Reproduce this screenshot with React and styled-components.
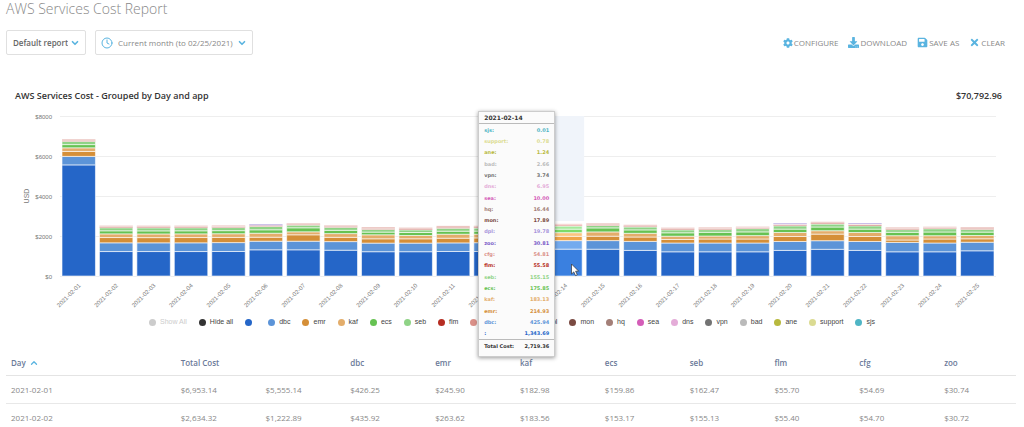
import React from 'react'
import styled, { createGlobalStyle } from 'styled-components'
import { FaCog, FaDownload, FaSave, FaTimes } from 'react-icons/fa'
import { ChevronDown, ChevronUp, Clock } from 'lucide-react'

const series = [
  { name: '', color: '#2566c8', hover: '#3a80e0' },
  { name: 'dbc', color: '#5c94d8', hover: '#74abee' },
  { name: 'emr', color: '#d58f38', hover: '#efa548' },
  { name: 'kaf', color: '#e3ad6b', hover: '#fac581' },
  { name: 'ecs', color: '#66c252', hover: '#7cdb68' },
  { name: 'seb', color: '#8fd386', hover: '#a4ea9b' },
  { name: 'flm', color: '#b62d22', hover: '#d04338' },
  { name: 'cfg', color: '#da9088', hover: '#f0a69e' },
  { name: 'zoo', color: '#7a5cc8', hover: '#9072de' },
  { name: 'dpl', color: '#a896dc', hover: '#bfacf2' },
  { name: 'mon', color: '#7a4a42' },
  { name: 'hq', color: '#a37f78' },
  { name: 'sea', color: '#d45db8' },
  { name: 'dns', color: '#e4acd8' },
  { name: 'vpn', color: '#737373' },
  { name: 'bad', color: '#bababa' },
  { name: 'ane', color: '#b8b93e' },
  { name: 'support', color: '#dbdb92' },
  { name: 'sjs', color: '#4fb5c5' },
]

// daily cost, in the order of the series above
const days = [
  [5555, 426, 246, 183, 160, 162, 56, 55],
  [1223, 436, 264, 184, 153, 155, 55, 55],
  [1223, 436, 260, 184, 153, 155, 55, 55],
  [1223, 436, 264, 184, 153, 155, 55, 55],
  [1225, 445, 260, 184, 153, 155, 55, 55],
  [1310, 430, 200, 200, 170, 165, 60, 0, 55],
  [1310, 430, 320, 150, 200, 135, 50, 50],
  [1290, 430, 215, 185, 165, 150, 55, 50],
  [1215, 430, 215, 200, 135, 135, 55, 60],
  [1215, 430, 215, 165, 150, 135, 55, 60],
  [1225, 430, 235, 200, 150, 150, 55, 60],
  [1225, 440, 240, 185, 155, 155, 55, 55],
  [1290, 430, 215, 185, 165, 150, 55, 50],
  [1343, 426, 215, 183, 176, 155, 55, 55],
  [1340, 430, 220, 215, 200, 120, 60, 55],
  [1280, 450, 220, 185, 170, 150, 50, 55],
  [1210, 440, 175, 165, 170, 150, 55, 55],
  [1210, 440, 200, 150, 185, 135, 60, 55],
  [1210, 440, 200, 170, 185, 165, 50, 50],
  [1280, 445, 250, 200, 170, 165, 55, 30, 50],
  [1335, 430, 330, 170, 185, 150, 55, 55],
  [1280, 445, 250, 200, 170, 165, 60, 30, 50],
  [1210, 470, 120, 215, 170, 135, 60, 55],
  [1210, 440, 200, 165, 185, 165, 50, 50],
  [1260, 430, 170, 165, 170, 135, 60, 55],
]

const tooltipRows = [
  ['sjs', '0.01'],
  ['support', '0.78'],
  ['ane', '1.24'],
  ['bad', '2.66'],
  ['vpn', '3.74'],
  ['dns', '6.95'],
  ['sea', '10.00'],
  ['hq', '16.44'],
  ['mon', '17.89'],
  ['dpl', '19.78'],
  ['zoo', '30.81'],
  ['cfg', '54.81'],
  ['flm', '55.58'],
  ['seb', '155.15'],
  ['ecs', '175.85'],
  ['kaf', '183.13'],
  ['emr', '214.93'],
  ['dbc', '425.94'],
  ['', '1,343.69'],
]

const columns = ['Total Cost', '', 'dbc', 'emr', 'kaf', 'ecs', 'seb', 'flm', 'cfg', 'zoo']

const rows = [
  ['2021-02-01', '$6,953.14', '$5,555.14', '$426.25', '$245.90', '$182.98', '$159.86', '$162.47', '$55.70', '$54.69', '$30.74'],
  ['2021-02-02', '$2,634.32', '$1,222.89', '$435.92', '$263.62', '$183.56', '$153.17', '$155.13', '$55.40', '$54.70', '$30.72'],
]

const HOVERED = 13
const PLOT = { left: 60, right: 996, top: 7, bottom: 167 }
const MAX = 8000
const STEP = (PLOT.right - PLOT.left) / days.length
const toY = value => PLOT.bottom - (value / MAX) * (PLOT.bottom - PLOT.top)

const Bar = ({ values, index }) => {
  let sum = 0
  return values.map((value, i) => {
    sum += value
    return (
      <Segment
        key={i}
        x={PLOT.left + index * STEP + 2}
        y={toY(sum)}
        width={STEP - 4}
        height={toY(0) - toY(value)}
        fill={index === HOVERED ? series[i].hover : series[i].color}
      />
    )
  })
}

const CostChart = () => (
  <Chart viewBox="0 0 1024 204" role="img" aria-label="AWS Services Cost by day">
    {[0, 2000, 4000, 6000, 8000].map(tick => (
      <g key={tick}>
        <line x1={PLOT.left} x2={PLOT.right} y1={toY(tick) + 0.5} y2={toY(tick) + 0.5} stroke="#eeeeee" />
        <TickLabel x="52" y={toY(tick) + 3} textAnchor="end">${tick}</TickLabel>
      </g>
    ))}
    <AxisTitle transform="translate(29 87) rotate(-90)" textAnchor="middle">USD</AxisTitle>
    <rect x={PLOT.left + HOVERED * STEP} y="7" width={STEP} height="105" fill="#f0f4fa" />
    {days.map((values, i) => (
      <g key={i}>
        <Bar values={values} index={i} />
        <TickLabel
          transform={`translate(${PLOT.left + i * STEP + 21} 177) rotate(-45)`}
          textAnchor="end"
        >
          2021-02-{String(i + 1).padStart(2, '0')}
        </TickLabel>
      </g>
    ))}
    <path
      d="M571.500 155v10l2.300-2.100 1.700 3.700 1.800-.8-1.700-3.600h3.100z"
      fill="#fff"
      stroke="#333"
      strokeWidth=".7"
    />
  </Chart>
)

const CostTooltip = () => (
  <Tooltip role="tooltip">
    <TooltipTitle>2021-02-14</TooltipTitle>
    <TooltipBody>
      {tooltipRows.map(([name, value]) => (
        <TooltipRow key={name} $color={series.find(s => s.name === name).color}>
          <span>{name}:</span>
          <span>{value}</span>
        </TooltipRow>
      ))}
    </TooltipBody>
    <TooltipTotal>
      <span>Total Cost:</span>
      <span>2,719.36</span>
    </TooltipTotal>
  </Tooltip>
)

const CostTable = () => (
  <Table>
    <colgroup>
      <Col $width="16.8%" />
      {columns.slice(1).map((name, i) => <Col key={i} $width="8.4%" />)}
      <Col />
    </colgroup>
    <thead>
      <tr>
        <Th>
          <SortButton>Day <ChevronUp size={10} strokeWidth={3} /></SortButton>
        </Th>
        {columns.map(name => <Th key={name}>{name}</Th>)}
      </tr>
    </thead>
    <tbody>
      {rows.map(row => (
        <tr key={row[0]}>
          {row.map((cell, i) => <Td key={i}>{cell}</Td>)}
        </tr>
      ))}
    </tbody>
  </Table>
)

const App = () => (
  <Page>
    <GlobalStyle />
    <Title>AWS Services Cost Report</Title>
    <Toolbar>
      <Picker $width="80px">
        <Select $bold aria-label="Report">
          <option>Default report</option>
        </Select>
        <ChevronDown size={10} strokeWidth={4} />
      </Picker>
      <Picker $width="158px">
        <Clock size={12} strokeWidth={2} />
        <Select aria-label="Period">
          <option>Current month (to 02/25/2021)</option>
        </Select>
        <ChevronDown size={10} strokeWidth={4} />
      </Picker>
      <Actions>
        <Action><FaCog size={10} />CONFIGURE</Action>
        <Action><FaDownload size={11} />DOWNLOAD</Action>
        <Action><FaSave size={11} />SAVE AS</Action>
        <Action><FaTimes size={11} />CLEAR</Action>
      </Actions>
    </Toolbar>
    <ChartHeader>
      <ChartTitle>AWS Services Cost - Grouped by Day and app</ChartTitle>
      <ChartTotal>$70,792.96</ChartTotal>
    </ChartHeader>
    <ChartArea>
      <CostChart />
      <CostTooltip />
    </ChartArea>
    <Legend>
      <LegendItem $muted><Dot $color="#cccccc" />Show All</LegendItem>
      <LegendItem><Dot $color="#333333" />Hide all</LegendItem>
      {series.map(({ name, color }) => (
        <LegendItem key={name} aria-label={name || 'untagged'}><Dot $color={color} />{name}</LegendItem>
      ))}
    </Legend>
    <CostTable />
  </Page>
)

export default App

const GlobalStyle = createGlobalStyle`
  * {
    box-sizing: border-box;
  }

  body {
    margin: 0;
    background: #fff;
    font-family: 'Open Sans', sans-serif;
  }

  button,
  select {
    padding: 0;
    border: 0;
    background: none;
    color: inherit;
    font: inherit;
    cursor: pointer;
  }
`;

const Page = styled.main`
  color: #888;
  font-size: 8px;
`;

const Title = styled.h1`
  margin: 0;
  padding: 0 6px;
  color: #888;
  font-size: 14px;
  font-weight: 300;
  line-height: 18px;
`;

const Toolbar = styled.div`
  display: flex;
  align-items: center;
  gap: 9px;
  padding: 12px 19px 0 6px;
`;

const Picker = styled.div`
  display: flex;
  align-items: center;
  gap: 2px;
  width: ${props => props.$width};
  height: 25px;
  padding: 0 5px;
  border: 1px solid #e0e0e0;
  border-radius: 2px;

  svg {
    flex: none;
    color: #5ab4e0;
  }
`;

const Select = styled.select`
  flex: 1;
  min-width: 0;
  padding-left: ${props => (props.$bold ? '1px' : '3px')};
  appearance: none;
  color: ${props => (props.$bold ? '#666' : '#888')};
  font-weight: ${props => (props.$bold ? 600 : 400)};
`;

const Actions = styled.div`
  display: flex;
  gap: 10px;
  margin-left: auto;
`;

const Action = styled.button`
  display: flex;
  align-items: center;
  gap: 1px;

  svg {
    color: #5ab4e0;
  }
`;

const ChartHeader = styled.div`
  display: flex;
  justify-content: space-between;
  padding: 34px 22px 0 15px;
  color: #333;
  font-size: 9px;
  line-height: 14px;
`;

const ChartTitle = styled.h2`
  margin: 0;
  font-size: inherit;
  font-weight: 600;
`;

const ChartTotal = styled.strong`
  font-weight: 600;
`;

const ChartArea = styled.div`
  position: relative;
  padding-top: 6px;
`;

const Chart = styled.svg`
  display: block;
  width: 100%;
  font-family: 'Liberation Sans', Arial, sans-serif;
`;

const Segment = styled.rect`
  stroke: #fff;
  stroke-opacity: 0.6;
`;

const TickLabel = styled.text`
  fill: #777;
  font-size: 6px;
`;

const AxisTitle = styled.text`
  fill: #777;
  font-size: 7px;
`;

const Tooltip = styled.div`
  position: absolute;
  top: 8px;
  left: 46.7%;
  display: flex;
  flex-direction: column;
  width: 77px;
  height: 246px;
  border: 1px solid #ccc;
  background: #fbfbfb;
  box-shadow: 0 1px 4px rgba(0, 0, 0, 0.4);
  color: #333;
  font-family: 'DejaVu Sans', Verdana, sans-serif;
  font-size: 5px;
  font-weight: 700;
`;

const TooltipTitle = styled.div`
  padding: 0 5px;
  border-bottom: 1px solid #bbb;
  font-size: 6px;
  line-height: 11px;
`;

const TooltipBody = styled.div`
  display: flex;
  flex: 1;
  flex-direction: column;
`;

const TooltipRow = styled.div`
  display: flex;
  flex: 1;
  align-items: center;
  justify-content: space-between;
  padding: 0 5px;
  color: ${props => props.$color};
`;

const TooltipTotal = styled(TooltipRow)`
  flex: none;
  height: 17px;
  padding-bottom: 5px;
  border-top: 1px solid #bbb;
  color: #333;
`;

const Legend = styled.div`
  display: flex;
  flex-wrap: wrap;
  justify-content: center;
  gap: 4px 12px;
  padding: 5px 6px 0;
  font-family: 'Liberation Sans', Arial, sans-serif;
  font-size: 7px;
  line-height: 8px;
`;

const LegendItem = styled.button`
  display: flex;
  align-items: center;
  color: ${props => (props.$muted ? '#ccc' : '#444')};
`;

const Dot = styled.i`
  width: 7px;
  height: 7px;
  margin-right: 4px;
  border-radius: 50%;
  background: ${props => props.$color};
`;

const Table = styled.table`
  width: calc(100% - 14px);
  margin: 25px 8px 0 6px;
  border-collapse: collapse;
  table-layout: fixed;
`;

const Col = styled.col`
  width: ${props => props.$width};
`;

const Th = styled.th`
  height: 24px;
  padding: 0 5px;
  border-bottom: 1px solid #e4e4e4;
  color: #6b7a99;
  font-weight: 600;
  text-align: left;
`;

const SortButton = styled.button`
  display: flex;
  align-items: center;
  gap: 3px;

  svg {
    color: #5ab4e0;
  }
`;

const Td = styled.td`
  height: 28px;
  padding: 0 5px;
  border-bottom: 1px solid #e8e8e8;
`;
